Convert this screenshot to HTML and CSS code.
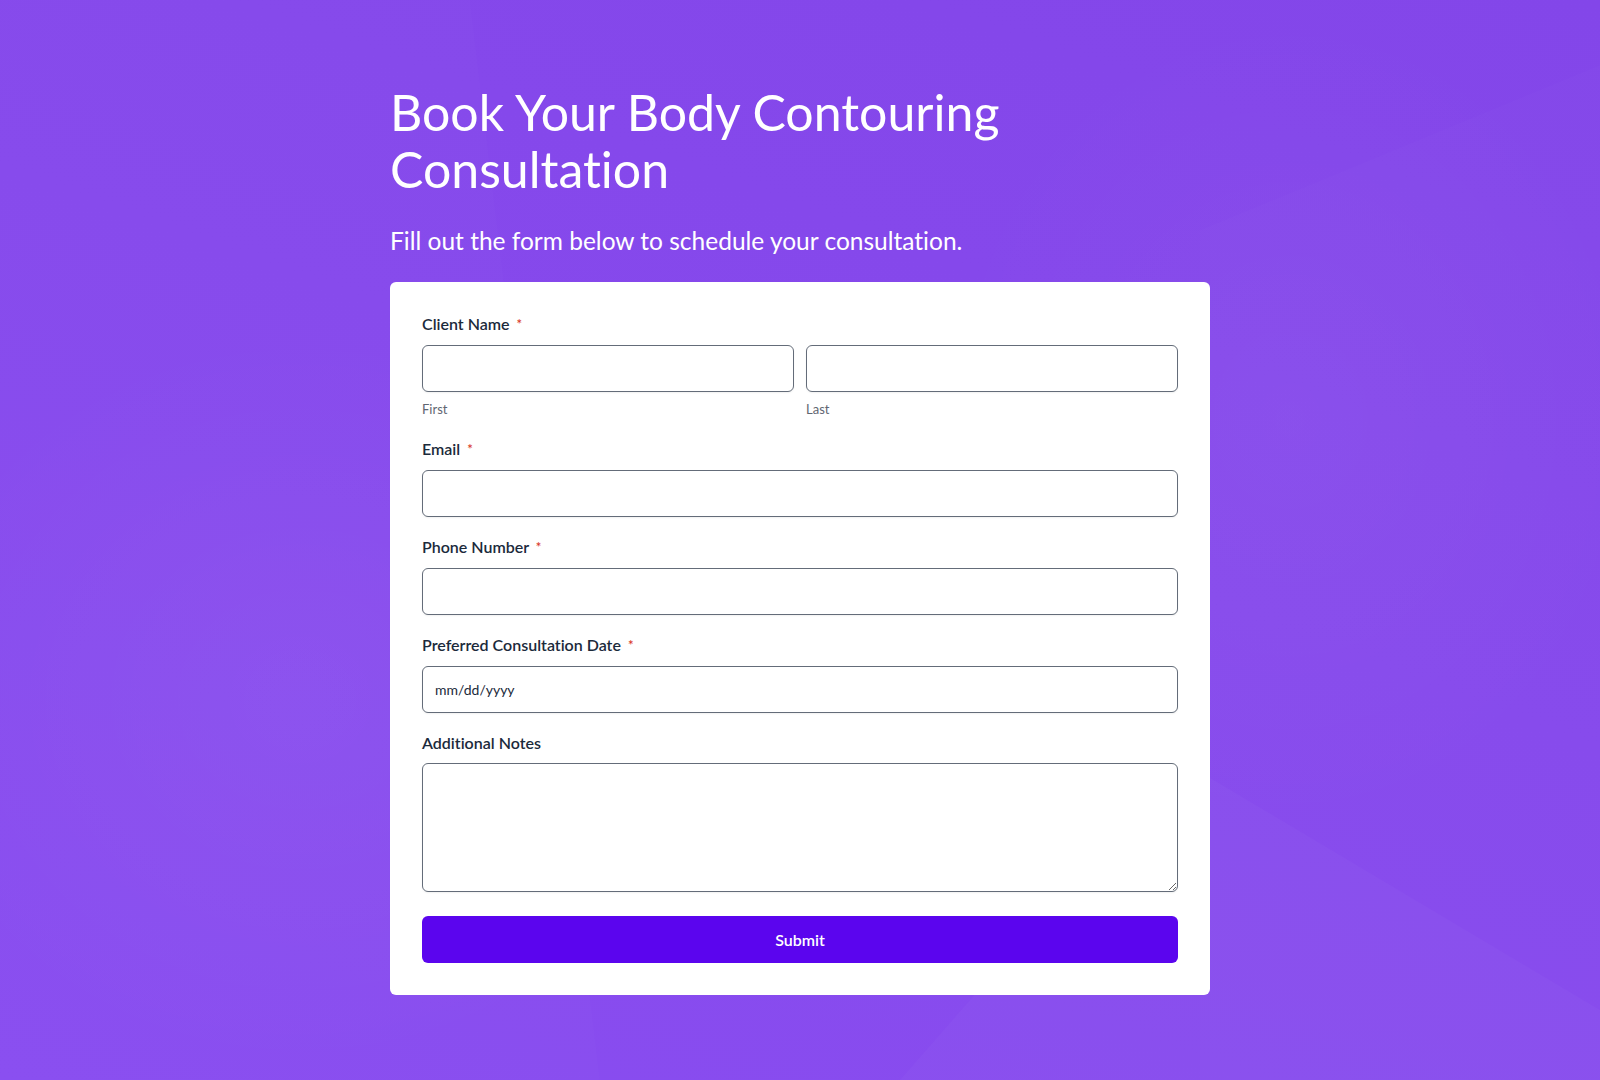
FILE: index.html
```html
<!DOCTYPE html>
<html lang="en">
<head>
<meta charset="utf-8">
<title>Book Your Body Contouring Consultation</title>
<link rel="stylesheet" href="styles.css">
</head>
<body>
<main class="page">
  <header class="intro">
    <h1 class="title">Book Your Body Contouring Consultation</h1>
    <p class="subtitle">Fill out the form below to schedule your consultation.</p>
  </header>
  <form class="card">
    <div class="field">
      <label class="label">Client Name <span class="req">*</span></label>
      <div class="name-row">
        <div class="name-col">
          <input class="input" type="text">
          <span class="sublabel">First</span>
        </div>
        <div class="name-col">
          <input class="input" type="text">
          <span class="sublabel">Last</span>
        </div>
      </div>
    </div>
    <div class="field">
      <label class="label">Email <span class="req">*</span></label>
      <input class="input" type="email">
    </div>
    <div class="field">
      <label class="label">Phone Number <span class="req">*</span></label>
      <input class="input" type="tel">
    </div>
    <div class="field">
      <label class="label">Preferred Consultation Date <span class="req">*</span></label>
      <input class="input date" type="text" placeholder="mm/dd/yyyy">
    </div>
    <div class="field">
      <label class="label">Additional Notes</label>
      <textarea class="input textarea"></textarea>
    </div>
    <button class="submit" type="button">Submit</button>
  </form>
</main>
</body>
</html>
```
FILE: styles.css
```css
* { box-sizing: border-box; }
html, body { margin: 0; padding: 0; }
body {
  min-height: 1080px;
  font-family: Lato, "Open Sans", sans-serif;
  font-variant-ligatures: none;
  background-color: #8548eb;
  background-image:
    url("data:image/svg+xml,%3Csvg xmlns='http://www.w3.org/2000/svg' width='1600' height='1080'%3E%3Cpolygon points='1180,760 1600,1010 1600,1080 900,1080' fill='%23ffffff' fill-opacity='0.025'/%3E%3Cpolygon points='1200,230 1600,65 1600,1080 1200,1080' fill='%23ffffff' fill-opacity='0.012'/%3E%3Cpolygon points='0,0 470,0 600,1080 0,1080' fill='%23ffffff' fill-opacity='0.012'/%3E%3C/svg%3E"),
    radial-gradient(ellipse 420px 380px at 300px 700px, rgba(255,255,255,0.035), rgba(255,255,255,0) 100%),
    radial-gradient(ellipse 360px 420px at 1290px 420px, rgba(255,255,255,0.03), rgba(255,255,255,0) 100%),
    linear-gradient(200deg, #8346e9 0%, #8649ec 45%, #894df0 100%);
  background-repeat: no-repeat;
}
.page {
  width: 820px;
  margin: 0 auto;
  padding-top: 84px;
  padding-bottom: 86px;
}
.intro { color: #ffffff; }
.title {
  margin: 0;
  font-size: 50px;
  line-height: 57px;
  font-weight: 400;
  max-width: 660px;
}
.subtitle {
  margin: 28px 0 0 0;
  font-size: 24.5px;
  line-height: 30px;
  font-weight: 400;
}
.card {
  margin-top: 26px;
  background: #ffffff;
  border-radius: 6px;
  padding: 31px 32px 32px 32px;
  display: flex;
  flex-direction: column;
}
.field {
  display: flex;
  flex-direction: column;
  margin-bottom: 19px;
}
.label {
  font-size: 16px;
  line-height: 21px;
  font-weight: 600;
  color: #1b2a3b;
  margin-bottom: 10px;
}
.req {
  color: #d93a2a;
  font-size: 13px;
  margin-left: 3px;
  vertical-align: 1px;
}
.name-row {
  display: grid;
  grid-template-columns: 1fr 1fr;
  column-gap: 12px;
}
.name-col {
  display: flex;
  flex-direction: column;
}
.sublabel {
  margin-top: 9px;
  margin-bottom: 1px;
  font-size: 13px;
  line-height: 17px;
  color: #5f6672;
}
.input {
  display: block;
  width: 100%;
  height: 47px;
  border: 1px solid #646c79;
  border-radius: 6px;
  background: #ffffff;
  padding: 0 12px;
  font-family: Lato, "Open Sans", sans-serif;
  font-size: 14px;
  color: #1b2a3b;
  box-shadow: 0 1px 2px rgba(0,0,0,0.06);
}
.date::placeholder { color: #1b2a3b; opacity: 1; }
.textarea {
  height: 129px;
  padding: 10px 12px;
  resize: vertical;
}
.submit {
  height: 47px;
  margin-top: 5px;
  border: 0;
  border-radius: 6px;
  background: #5b05ee;
  color: #ffffff;
  font-family: Lato, "Open Sans", sans-serif;
  font-size: 16px;
  font-weight: 600;
  cursor: pointer;
}
```
